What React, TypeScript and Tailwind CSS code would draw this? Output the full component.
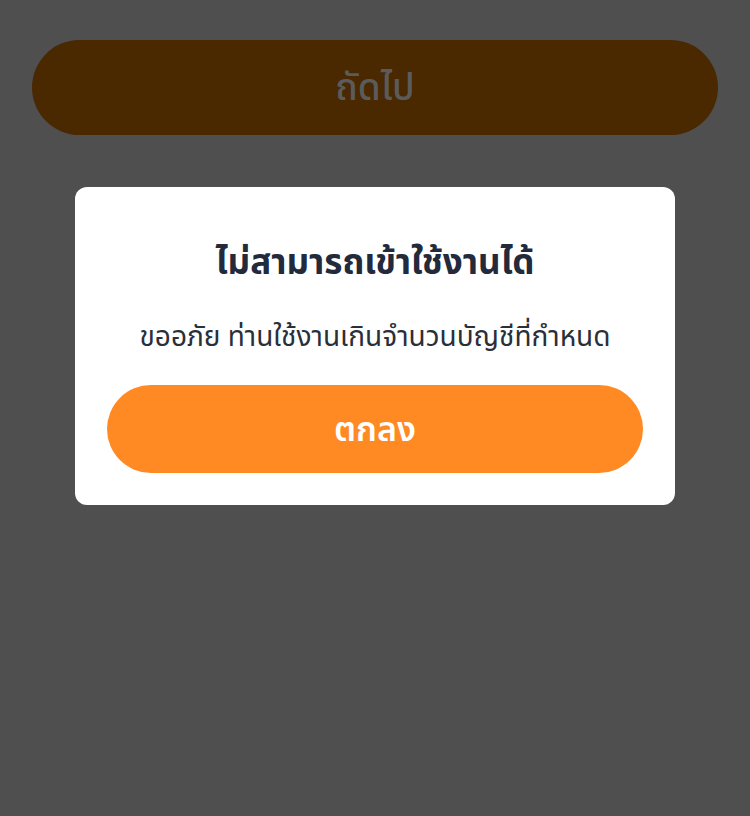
const App = () => {
    const font = { fontFamily: '"Noto Sans Thai", "Noto Sans", "Liberation Sans", sans-serif' };

    return (
        <div className="min-h-[816px] w-full bg-[#4f4f4f] px-8 pt-10" style={font}>
            <button type="button" className="flex h-[95px] w-full items-center justify-center rounded-full bg-[#4a2800] pt-[4px] text-[37px] font-medium text-[#5b5b5b]">
                ถัดไป
            </button>
            <div className="mx-auto mt-[52px] flex w-[600px] flex-col items-center rounded-xl bg-white px-8 pt-[53px] pb-8">
                <h2 className="text-[35px] font-bold leading-[48px] text-[#222a3b]">ไม่สามารถเข้าใช้งานได้</h2>
                <p className="mt-[31px] text-[28px] leading-[38px] text-[#2a2f3a]">ขออภัย ท่านใช้งานเกินจำนวนบัญชีที่กำหนด</p>
                <button type="button" className="mt-[28px] flex h-[88px] w-full items-center justify-center rounded-full bg-[#ff8a24] pt-[2px] text-[34px] font-semibold text-white">
                    ตกลง
                </button>
            </div>
        </div>
    );
}

export default App;
